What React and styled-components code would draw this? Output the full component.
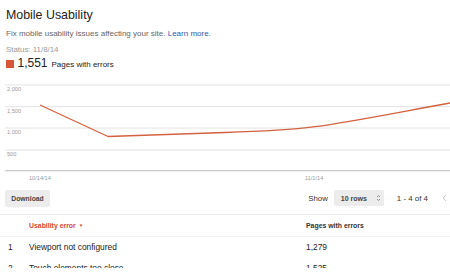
import React from "react";
import styled, { createGlobalStyle } from "styled-components";

const Global = createGlobalStyle`
  html, body { margin: 0; padding: 0; background: #fff; }
  body { font-family: "Liberation Sans", Arial, sans-serif; color: #222; }
`;

const Page = styled.div`
  width: 450px;
  height: 268px;
  overflow: hidden;
  background: #fff;
`;

const Header = styled.div`
  padding: 7.5px 0 0 6px;
`;

const Title = styled.h1`
  margin: 0;
  font-size: 12.4px;
  line-height: 15px;
  font-weight: normal;
  color: #222;
`;

const Subtitle = styled.p`
  margin: 6.5px 0 0;
  font-size: 8px;
  line-height: 10px;
  color: #666;
`;

const Link = styled.a`
  color: #2a5cb4;
  text-decoration: none;
`;

const Status = styled.div`
  margin-top: 6.2px;
  font-size: 7.9px;
  line-height: 10px;
  color: #999;
`;

const CountRow = styled.div`
  margin-top: 1.6px;
  display: flex;
  align-items: center;
  gap: 4px;
  height: 14px;
`;

const Swatch = styled.span`
  width: 7.5px;
  height: 7.5px;
  background: #d9553a;
  flex: none;
`;

const CountText = styled.span`
  line-height: 14px;
  white-space: nowrap;
`;

const Number = styled.span`
  font-size: 12px;
  color: #222;
  margin-right: 4px;
`;

const CountLabel = styled.span`
  font-size: 8px;
  color: #222;
`;

const Chart = styled.svg`
  display: block;
  margin-top: 9.2px;
  width: 450px;
  height: 102px;
`;

const Toolbar = styled.div`
  display: flex;
  align-items: center;
  padding: 8px 3px 7px 5px;
  height: 17px;
  border-bottom: 1px solid #ebebeb;
`;

const Button = styled.button`
  height: 17px;
  width: 45px;
  padding: 0;
  border: none;
  border-radius: 2px;
  background: #ececec;
  color: #444;
  font-family: inherit;
  font-size: 6.8px;
  font-weight: bold;
`;

const Right = styled.div`
  margin-left: auto;
  display: flex;
  align-items: center;
`;

const ShowLabel = styled.span`
  font-size: 7.8px;
  color: #333;
  margin-right: 6px;
`;

const Select = styled.div`
  width: 50px;
  height: 16px;
  box-sizing: border-box;
  background: #ececec;
  border-radius: 2px;
  display: flex;
  align-items: center;
  padding-left: 7px;
  gap: 9px;
  font-size: 7px;
  font-weight: bold;
  color: #444;
`;

const Range = styled.span`
  margin-left: 13px;
  font-size: 7.9px;
  color: #333;
`;

const Pager = styled.span`
  margin-left: 14px;
  display: flex;
  align-items: center;
`;

const Grid = styled.div`
  display: grid;
  grid-template-columns: 21px 277px 1fr;
  padding-left: 8px;
  align-items: center;
  height: 20px;
  padding-top: ${(p) => (p.$head ? "1px" : "0")};
  border-bottom: 1px solid ${(p) => (p.$head ? "#f3f3f3" : "transparent")};
`;

const HeadCell = styled.span`
  font-size: 6.9px;
  font-weight: bold;
  color: ${(p) => (p.$active ? "#d14836" : "#333")};
  white-space: nowrap;
`;

const Arrow = styled.span`
  font-size: 4.5px;
  margin-left: 3px;
  vertical-align: 1px;
`;

const Cell = styled.span`
  font-size: 8.4px;
  color: #222;
  white-space: nowrap;
`;

const linePath =
  "M40 25 L108 56.5 L225 52.5 C260 51.5 290 50 315 46.7 C350 42 400 32 450 23";

const gridY = [5, 26.7, 48, 70];
const labels = [
  ["2,000", 11.3],
  ["1,500", 33],
  ["1,000", 54],
  ["500", 76],
];

const rows = [
  ["1", "Viewport not configured", "1,279"],
  ["2", "Touch elements too close", "1,525"],
];

export default function App() {
  return (
    <Page>
      <Global />
      <Header>
        <Title>Mobile Usability</Title>
        <Subtitle>
          Fix mobile usability issues affecting your site. <Link href="#">Learn more.</Link>
        </Subtitle>
        <Status>Status: 11/8/14</Status>
        <CountRow>
          <Swatch />
          <CountText>
            <Number>1,551</Number>
            <CountLabel>Pages with errors</CountLabel>
          </CountText>
        </CountRow>
      </Header>

      <Chart viewBox="0 0 450 102">
        {gridY.map((y) => (
          <line key={y} x1="5" x2="450" y1={y} y2={y} stroke="#e2e2e2" strokeWidth="1" />
        ))}
        <line x1="5" x2="450" y1="90.7" y2="90.7" stroke="#bcbcbc" strokeWidth="1" />
        {labels.map(([t, y]) => (
          <text key={t} x="7" y={y} fontSize="5.6" fill="#9a9a9a" fontFamily="Liberation Sans, Arial, sans-serif">
            {t}
          </text>
        ))}
        <text x="29" y="100" fontSize="5.6" fill="#9a9a9a" fontFamily="Liberation Sans, Arial, sans-serif">
          10/14/14
        </text>
        <text x="305" y="100" fontSize="5.6" fill="#9a9a9a" fontFamily="Liberation Sans, Arial, sans-serif">
          11/1/14
        </text>
        <path d={linePath} fill="none" stroke="#d4613f" strokeWidth="1.3" strokeLinejoin="round" />
      </Chart>

      <Toolbar>
        <Button>Download</Button>
        <Right>
          <ShowLabel>Show</ShowLabel>
          <Select>
            <span>10 rows</span>
            <svg width="5" height="8" viewBox="0 0 5 8">
              <path d="M1 3 L2.5 1.5 L4 3 M1 5 L2.5 6.5 L4 5" fill="none" stroke="#777" strokeWidth="0.8" />
            </svg>
          </Select>
          <Range>1 - 4 of 4</Range>
          <Pager>
            <svg width="5" height="8" viewBox="0 0 5 8">
              <path d="M4 1 L1.3 4 L4 7" fill="none" stroke="#bbb" strokeWidth="0.9" />
            </svg>
          </Pager>
        </Right>
      </Toolbar>

      <Grid $head>
        <span />
        <HeadCell $active>
          Usability error<Arrow>▼</Arrow>
        </HeadCell>
        <HeadCell>Pages with errors</HeadCell>
      </Grid>
      {rows.map(([i, name, n]) => (
        <Grid key={i}>
          <Cell>{i}</Cell>
          <Cell>{name}</Cell>
          <Cell>{n}</Cell>
        </Grid>
      ))}
    </Page>
  );
}
